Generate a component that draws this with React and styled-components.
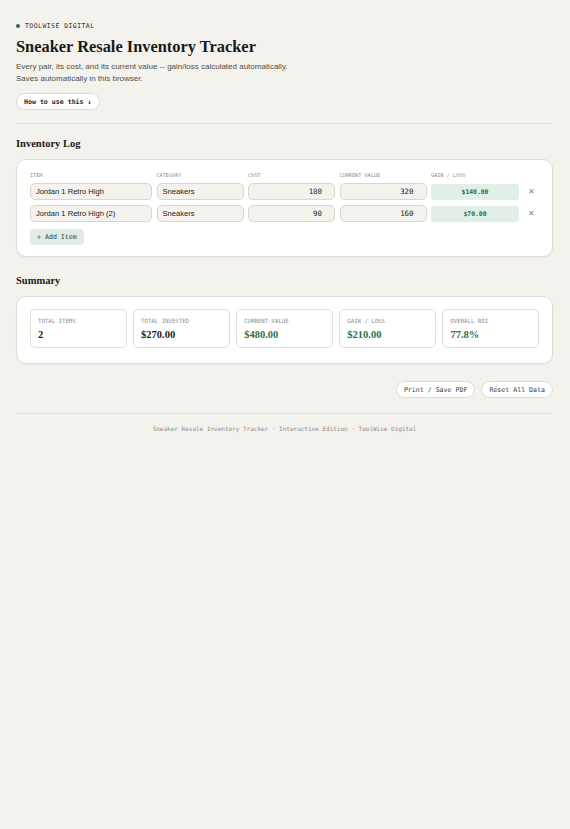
import React, { useState } from "react";
import styled, { createGlobalStyle } from "styled-components";

const GlobalStyle = createGlobalStyle`
  * { box-sizing: border-box; }
  body {
    margin: 0;
    background: #f4f2ed;
    font-family: "Liberation Sans", Arial, sans-serif;
    color: #1c1c1a;
  }
`;

const MONO = `"DejaVu Sans Mono", "Liberation Mono", monospace`;
const SERIF = `"Liberation Serif", "Times New Roman", serif`;

const initialItems = [
  { id: 1, name: "Jordan 1 Retro High", category: "Sneakers", cost: 180, value: 320 },
  { id: 2, name: "Jordan 1 Retro High (2)", category: "Sneakers", cost: 90, value: 160 },
];

const money = (n) => `$${n.toFixed(2)}`;

export default function App() {
  const [items, setItems] = useState(initialItems);

  const update = (id, key, val) =>
    setItems((list) => list.map((it) => (it.id === id ? { ...it, [key]: val } : it)));
  const remove = (id) => setItems((list) => list.filter((it) => it.id !== id));
  const add = () =>
    setItems((list) => [...list, { id: Date.now(), name: "", category: "", cost: 0, value: 0 }]);

  const invested = items.reduce((s, it) => s + Number(it.cost || 0), 0);
  const current = items.reduce((s, it) => s + Number(it.value || 0), 0);
  const gain = current - invested;
  const roi = invested ? (gain / invested) * 100 : 0;

  return (
    <>
      <GlobalStyle />
      <Page>
        <Eyebrow>
          <Dot />
          TOOLWISE DIGITAL
        </Eyebrow>
        <Title>Sneaker Resale Inventory Tracker</Title>
        <Lead>
          Every pair, its cost, and its current value -- gain/loss calculated automatically.
          <br />
          Saves automatically in this browser.
        </Lead>
        <Actions $start>
          <PillButton $bold>How to use this ↓</PillButton>
        </Actions>
        <Rule />

        <SectionTitle>Inventory Log</SectionTitle>
        <Card>
          <Grid>
            <HeadLabel>ITEM</HeadLabel>
            <HeadLabel>CATEGORY</HeadLabel>
            <HeadLabel>COST</HeadLabel>
            <HeadLabel>CURRENT VALUE</HeadLabel>
            <HeadLabel>GAIN / LOSS</HeadLabel>
            <span />
            {items.map((it) => {
              const g = Number(it.value || 0) - Number(it.cost || 0);
              return (
                <React.Fragment key={it.id}>
                  <Field value={it.name} onChange={(e) => update(it.id, "name", e.target.value)} />
                  <Field
                    value={it.category}
                    onChange={(e) => update(it.id, "category", e.target.value)}
                  />
                  <NumField value={it.cost} onChange={(e) => update(it.id, "cost", e.target.value)} />
                  <NumField value={it.value} onChange={(e) => update(it.id, "value", e.target.value)} />
                  <GainCell $negative={g < 0}>{money(g)}</GainCell>
                  <RemoveButton onClick={() => remove(it.id)}>✕</RemoveButton>
                </React.Fragment>
              );
            })}
          </Grid>
          <AddButton onClick={add}>+ Add Item</AddButton>
        </Card>

        <SectionTitle>Summary</SectionTitle>
        <SummaryCard>
          <Stat>
            <StatLabel>TOTAL ITEMS</StatLabel>
            <StatValue>{items.length}</StatValue>
          </Stat>
          <Stat>
            <StatLabel>TOTAL INVESTED</StatLabel>
            <StatValue>{money(invested)}</StatValue>
          </Stat>
          <Stat>
            <StatLabel>CURRENT VALUE</StatLabel>
            <StatValue $green>{money(current)}</StatValue>
          </Stat>
          <Stat>
            <StatLabel>GAIN / LOSS</StatLabel>
            <StatValue $green>{money(gain)}</StatValue>
          </Stat>
          <Stat>
            <StatLabel>OVERALL ROI</StatLabel>
            <StatValue $green>{roi.toFixed(1)}%</StatValue>
          </Stat>
        </SummaryCard>

        <Actions>
          <PillButton onClick={() => window.print()}>Print / Save PDF</PillButton>
          <PillButton onClick={() => setItems([])}>Reset All Data</PillButton>
        </Actions>
        <Rule $footer />
        <Footer>Sneaker Resale Inventory Tracker · Interactive Edition · ToolWise Digital</Footer>
      </Page>
    </>
  );
}

const Page = styled.div`
  padding: 21px 17px 40px 16px;
`;

const Eyebrow = styled.div`
  display: flex;
  align-items: center;
  gap: 5px;
  font-family: ${MONO};
  font-size: 6.4px;
  letter-spacing: 0.5px;
  color: #2b2b28;
  height: 10px;
`;

const Dot = styled.span`
  width: 4px;
  height: 4px;
  border-radius: 50%;
  background: #2e6b47;
`;

const Title = styled.h1`
  font-family: ${SERIF};
  font-size: 16.4px;
  font-weight: 700;
  margin: 6px 0 4px;
  line-height: 20px;
  color: #1a1a18;
`;

const Lead = styled.p`
  margin: 0 0 8px;
  font-size: 8px;
  line-height: 12px;
  color: #4f4f4b;
`;

const PillButton = styled.button`
  font-family: ${MONO};
  font-size: 6.6px;
  font-weight: ${(p) => (p.$bold ? 700 : 400)};
  color: ${(p) => (p.$bold ? "#1e1e1c" : "#3a3a37")};
  background: #fff;
  border: 1px solid #dcd9d1;
  border-radius: 10px;
  height: 17px;
  padding: 0 7px;
  cursor: pointer;
`;

const Rule = styled.hr`
  border: none;
  border-top: 1px solid #e2dfd8;
  margin: ${(p) => (p.$footer ? "15px 0 11px" : "13px 0 13px")};
`;

const SectionTitle = styled.h2`
  font-family: ${SERIF};
  font-size: 10.5px;
  font-weight: 700;
  margin: 0 0 9px;
  line-height: 13px;
  color: #1a1a18;
`;

const Card = styled.div`
  background: #fff;
  border: 1px solid #dedbd2;
  border-radius: 10px;
  padding: 11px 13px 11px;
  margin-bottom: 17px;
  box-shadow: 0 1px 2px rgba(0, 0, 0, 0.05);
`;

const Grid = styled.div`
  display: grid;
  grid-template-columns: 122px 87px 87px 87px 88px 1fr;
  column-gap: 4.5px;
  row-gap: 5px;
  align-items: center;
`;

const HeadLabel = styled.div`
  font-family: ${MONO};
  font-size: 5.2px;
  color: #8e8c86;
  line-height: 8px;
  margin-bottom: -1px;
`;

const Field = styled.input`
  height: 17px;
  width: 100%;
  border: 1px solid #d9d6ce;
  border-radius: 5px;
  background: #f4f2ed;
  font-family: "Liberation Sans", Arial, sans-serif;
  font-size: 7.6px;
  color: #222;
  padding: 0 5px;
  outline: none;
`;

const NumField = styled(Field).attrs({ type: "text", inputMode: "numeric" })`
  font-family: ${MONO};
  font-size: 7.4px;
  text-align: right;
  padding-right: 12px;
`;

const GainCell = styled.div`
  height: 16px;
  border-radius: 3px;
  background: ${(p) => (p.$negative ? "#f5e3e0" : "#e2efe6")};
  color: ${(p) => (p.$negative ? "#9a3b2e" : "#2d6a45")};
  font-family: ${MONO};
  font-size: 6.4px;
  font-weight: 700;
  display: flex;
  align-items: center;
  justify-content: center;
`;

const RemoveButton = styled.button`
  border: none;
  background: none;
  color: #8a8882;
  font-size: 8px;
  padding: 0;
  justify-self: end;
  margin-right: 4px;
  cursor: pointer;
`;

const AddButton = styled.button`
  margin-top: 7px;
  height: 16px;
  padding: 0 7px;
  border: none;
  border-radius: 4px;
  background: #e1ebe5;
  color: #2a3f33;
  font-family: ${MONO};
  font-size: 6.6px;
  cursor: pointer;
`;

const SummaryCard = styled(Card)`
  display: grid;
  grid-template-columns: repeat(5, 1fr);
  gap: 6.5px;
  padding: 12px 13px 15px;
`;

const Stat = styled.div`
  border: 1px solid #e2dfd8;
  border-radius: 5px;
  padding: 7px 7px 6px;
  height: 39px;
  background: #fff;
`;

const StatLabel = styled.div`
  font-family: ${MONO};
  font-size: 5.7px;
  color: #8e8c86;
  line-height: 8px;
`;

const StatValue = styled.div`
  font-family: ${SERIF};
  font-weight: 700;
  font-size: 10.5px;
  line-height: 14px;
  margin-top: 3px;
  color: ${(p) => (p.$green ? "#2e7048" : "#1c1c1a")};
`;

const Actions = styled.div`
  display: flex;
  justify-content: ${(p) => (p.$start ? "flex-start" : "flex-end")};
  gap: 6px;
`;

const Footer = styled.div`
  text-align: center;
  font-family: ${MONO};
  font-size: 6px;
  color: #8e8c86;
`;
